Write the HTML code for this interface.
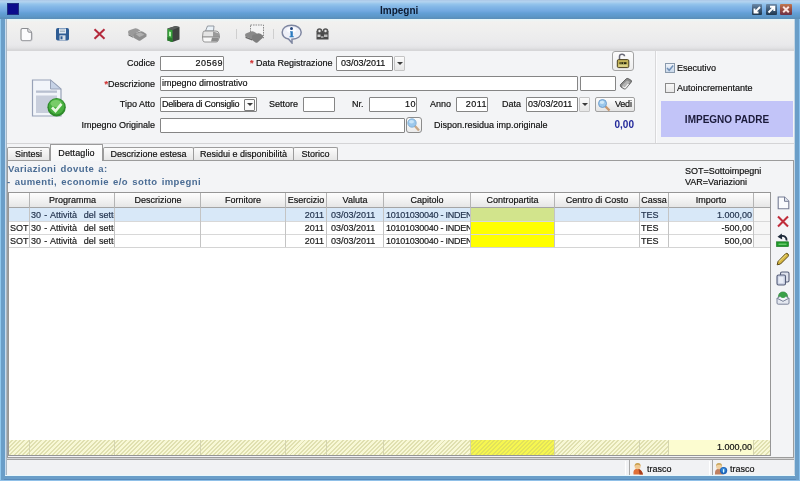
<!DOCTYPE html>
<html><head><meta charset="utf-8">
<style>
*{margin:0;padding:0;box-sizing:border-box}
html,body{width:800px;height:481px;overflow:hidden}
body{position:relative;background:#6a9ec8;font-family:"Liberation Sans",sans-serif;font-size:9px;color:#101010}
.a{position:absolute}
.t{position:absolute;white-space:nowrap;line-height:15px;height:15px}
.r{text-align:right}
.inp{position:absolute;background:#fff;border:1px solid #858585;border-radius:1px;height:15px;line-height:13px;white-space:nowrap;overflow:hidden;padding:0 1px}
.dd{position:absolute;border:1px solid #c4c4c4;background:linear-gradient(#fbfbfb,#e6e6e6);border-radius:1px}
.dd:after{content:"";position:absolute;left:50%;margin-left:-3px;top:50%;margin-top:-2px;border-left:3px solid transparent;border-right:3px solid transparent;border-top:3px solid #3a3a3a}
.star{color:#d03030;font-weight:bold}
#frame{left:0;top:0;width:800px;height:481px;background:linear-gradient(90deg,#90c8ee 0,#90c8ee 1px,#6a9ec8 1px,#6a9ec8 799px,#88c0ec 799px)}
#title{left:0;top:0;width:800px;height:19px;background:linear-gradient(#a9c4e4 0,#b4d2ef 1px,#b0d2ef 2px,#94c4ec 4px,#82b6e6 7px,#72a8e0 11px,#63a0d6 13px,#5c96c6 17px,#5b8fba 18px,#5b8fba 19px)}
#content{left:5px;top:19px;width:790px;height:457px;background:#f3f4f6}
#toolbar{left:5px;top:19px;width:790px;height:32px;background:linear-gradient(#e4f6fb 0,#eef4f4 1.5px,#f2f1ef 3px,#eeeeee 14px,#e9e9eb 26px,#e2e2e4 29px,#d6d6d8 31px)}
.sep{position:absolute;width:1px;height:10px;background:#cfcfcf;top:29px}
.tab{position:absolute;top:147px;height:13px;border:1px solid #9c9c9c;border-bottom:none;background:linear-gradient(#fbfbfb,#e6e6e6);line-height:12px;text-align:center;border-radius:2px 2px 0 0}
.gh{position:absolute;top:193px;height:15px;line-height:14px;text-align:center;white-space:nowrap;overflow:hidden}
.gl{position:absolute;width:1px;background:#c4c4c4}
.cell{position:absolute;white-space:nowrap;overflow:hidden;line-height:13px;height:13px}
.t,.inp,.cell,.gh,.tab{-webkit-text-stroke:0.18px currentColor}
#wrap{position:absolute;left:0;top:0;width:800px;height:481px;filter:blur(0.3px)}
</style></head><body><div id="wrap">
<div id="frame" class="a"></div>
<div id="title" class="a"></div>
<!-- app icon -->
<div class="a" style="left:7px;top:3px;width:12px;height:12px;background:#0c0c8c;border:1px solid #203080"></div>
<div class="t" style="left:380px;top:3px;font-size:10px;font-weight:bold;color:#0c1a30;-webkit-text-stroke:0">Impegni</div>
<!-- window buttons -->
<div class="a" style="left:752px;top:4px;width:10px;height:11px;background:linear-gradient(#6d8cab 0,#46627e 40%,#1f374d 100%);border-radius:1px"></div>
<svg class="a" style="left:752px;top:4px" width="10" height="11"><path d="M8 3 L3.2 7.8 M2.5 4.5 V8.5 H6.5" stroke="#fff" stroke-width="1.9" fill="none"/></svg>
<div class="a" style="left:766px;top:4px;width:11px;height:11px;background:linear-gradient(#6d8cab 0,#46627e 40%,#1f374d 100%);border-radius:1px"></div>
<svg class="a" style="left:766px;top:4px" width="11" height="11"><path d="M2.5 8.5 L7.5 3.5 M4 2.8 H8.3 V7" stroke="#fff" stroke-width="1.9" fill="none"/></svg>
<div class="a" style="left:780px;top:4px;width:12px;height:11px;background:linear-gradient(#c07850 0,#a05040 45%,#6a3048 100%);border-radius:1px"></div>
<svg class="a" style="left:780px;top:4px" width="12" height="11"><path d="M3.2 2.8 L8.8 8.2 M8.8 2.8 L3.2 8.2" stroke="#fae4e0" stroke-width="2" fill="none"/></svg>

<div id="content" class="a"></div>
<div id="toolbar" class="a"></div>
<!-- toolbar icons -->
<svg class="a" style="left:19px;top:27px" width="15" height="15"><path d="M3.5 1.5 H8.8 L12.5 5.2 V12 Q12.5 13.5 11 13.5 H3.5 Q2 13.5 2 12 V3 Q2 1.5 3.5 1.5Z" fill="#fbfbfd" stroke="#8a8c90" stroke-width="1.1"/><path d="M8.8 1.5 V4 Q8.8 5.2 10 5.2 H12.5" fill="#e8e8ec" stroke="#8a8c90" stroke-width="1"/><path d="M3 14 H11.5 Q13.2 14 13.2 12.3 V6" stroke="#c4c4c8" fill="none" stroke-width="0.9"/></svg>
<svg class="a" style="left:55px;top:27px" width="15" height="14"><rect x="1" y="1" width="13" height="12.5" rx="1.8" fill="#2e5c94"/><rect x="4" y="1.5" width="7" height="5" fill="#dfe8f2"/><rect x="5" y="2.6" width="5" height="0.8" fill="#9ab"/><rect x="5" y="4.2" width="5" height="0.8" fill="#9ab"/><rect x="4.5" y="8.3" width="6" height="5" fill="#d4dde8"/><rect x="5.5" y="9.3" width="2" height="3" fill="#2e5c94"/></svg>
<svg class="a" style="left:93px;top:28px" width="13" height="12"><path d="M1.5 1.2 L11.5 10.8 M11.5 1.2 L1.5 10.8" stroke="#b42a3c" stroke-width="2"/></svg>
<svg class="a" style="left:127px;top:27px" width="21" height="15"><path d="M1 5 Q1 3.5 3 3 L7.5 1.5 Q9 1 10.5 1.8 L13.5 3.5 L8 6.5 L6.5 10 L1.5 7 Z" fill="#9a9a9a"/><path d="M1.5 7 L6.5 10 L6.5 11 L1.5 8.5Z" fill="#7a7a7a"/><path d="M6.5 8 Q6.5 6.5 8.5 6 L13 4.5 Q14.5 4 16 4.8 L19.5 7 L19.5 9.5 L13.5 13.5 Q12.5 14 11.5 13.5 L7 11 Z" fill="#8e8e8e"/><path d="M8.5 7 L13.5 5.5 L17.5 7.8 L12.5 10 Z" fill="#b0b0b0"/></svg>
<svg class="a" style="left:166px;top:25px" width="15" height="18"><path d="M1.5 3.5 L9.5 1 L13.5 2 L13.5 14.5 L6.5 17 L1.5 15.5 Z" fill="#3e4240"/><path d="M1.5 3.5 L6.5 5 L6.5 17 L1.5 15.5Z" fill="#36a03a"/><path d="M1.5 3.5 L9.5 1 L13.5 2 L6.5 5 Z" fill="#5a5e5c"/><path d="M3 6.5 L5 7 V11.5 L3 11Z" fill="#b8f0b0"/><path d="M1.5 12 L6.5 13.5 V17 L1.5 15.5Z" fill="#2a7a2e"/></svg>
<svg class="a" style="left:201px;top:25px" width="20" height="18"><path d="M4.5 6 L6.5 1 H13 L12.5 6 Z" fill="#eaf2f8" stroke="#8a9098" stroke-width="0.9"/><path d="M2 7.5 Q2 6 4 6 H15 Q17.5 6 18 8.5 L18.5 12 H1.5 Z" fill="#e4e4e4" stroke="#8c8c8c" stroke-width="0.9"/><path d="M12 6.5 L18 8.5 L18.5 12 L12 12Z" fill="#9a9a9a"/><path d="M1.5 12 H18.5 L17 16 Q16.5 17 15 17 H4 Q2.5 17 2 16 Z" fill="#f8f8f8" stroke="#8c8c8c" stroke-width="0.9"/><path d="M11 12.5 H18 L16.5 16.5 H10Z" fill="#8a8a8a"/></svg>
<div class="sep" style="left:236px"></div>
<svg class="a" style="left:244px;top:24px" width="21" height="20"><rect x="6.5" y="1" width="13" height="13" fill="#f4f4f4" stroke="#8a8a8a" stroke-dasharray="1.6 0.9"/><path d="M1 11 Q1 9.5 3 9 L7 7.5 Q8.5 7 10 7.8 L13 9.5 L9 12 L8 15 L1.5 12.5 Z" fill="#8a8a8a"/><path d="M8 12.5 Q8 11 10 10.5 L13.5 9.5 Q15 9 16.5 9.8 L19 11.5 L19 13.5 L13.5 18.5 Q12.5 19 11.5 18.5 L8 16 Z" fill="#7e7e7e"/><path d="M1.5 12.5 L8 15 L8 16.5 L1.5 14 Z" fill="#6a6a6a"/></svg>
<div class="sep" style="left:273px"></div>
<svg class="a" style="left:281px;top:24px" width="22" height="20"><path d="M10.5 1.2 C4.8 1.2 1.2 4.4 1.2 8.3 C1.2 11.8 4 14.3 7.5 15 L11 19 L11 15.3 C16.5 15 20.2 12.2 20.2 8.3 C20.2 4.4 16.2 1.2 10.5 1.2Z" fill="#eef0f8" stroke="#7e86a0" stroke-width="1.5"/><ellipse cx="10.5" cy="6" rx="5" ry="3" fill="#fafbff"/><circle cx="10.5" cy="4.6" r="1.5" fill="#2a4a80"/><path d="M9 7.3 H11.8 V12.3 H12.8 V13.3 H8.5 V12.3 H9.5 V8.3 H9Z" fill="#2a7ac0"/></svg>
<svg class="a" style="left:315px;top:27px" width="15" height="14"><path d="M1.5 4 H13.5 V12.5 H1.5Z" fill="#4a4a4a"/><circle cx="4.5" cy="4" r="2.8" fill="#555"/><circle cx="10.5" cy="4" r="2.8" fill="#555"/><circle cx="4.5" cy="4" r="1.2" fill="#e8e8e8"/><circle cx="10.5" cy="4" r="1.2" fill="#e8e8e8"/><rect x="2.5" y="7.5" width="3" height="2.5" fill="#cfcfcf"/><rect x="9" y="7.5" width="3.5" height="2.5" fill="#bdbdbd"/><rect x="6" y="9" width="2.5" height="2" fill="#9a9a9a"/></svg>

<!-- form -->
<div class="a" style="left:5px;top:143px;width:790px;height:1px;background:#d4d4d6"></div>
<div class="a" style="left:655px;top:51px;width:1px;height:92px;background:#d8d8da"></div><div class="a" style="left:656px;top:51px;width:1px;height:92px;background:#fbfbfd"></div>
<!-- big doc icon -->
<svg class="a" style="left:31px;top:79px" width="40" height="40"><path d="M1.5 1 H19.5 L30 10 V37 H1.5 Z" fill="#f2f5fa" stroke="#98a2b8" stroke-width="1.2"/><path d="M19.5 1 V10 H30 Z" fill="#c6d2e6" stroke="#98a2b8" stroke-width="1"/><rect x="5" y="11.5" width="21" height="2.3" fill="#b8c0d0"/><rect x="5" y="16.5" width="21" height="17.5" fill="#c8cedc"/><circle cx="25.6" cy="28.2" r="9.2" fill="#2e8a2a"/><circle cx="25.6" cy="27.6" r="7.8" fill="#48b040"/><ellipse cx="25" cy="24.5" rx="5.5" ry="3.5" fill="#78cc68"/><path d="M21 28.5 L24.5 32 L30.5 24.8" stroke="#e8f8e0" stroke-width="2.6" fill="none"/></svg>

<div class="t r" style="left:100px;width:55px;top:56px">Codice</div>
<div class="inp r" style="left:160px;top:56px;width:64px;letter-spacing:0.5px;padding-right:0">20569</div>
<div class="t" style="left:250px;top:56px"><span class="star">*</span> Data Registrazione</div>
<div class="inp" style="left:336px;top:56px;width:57px;padding-left:4px">03/03/2011</div>
<div class="dd" style="left:394px;top:56px;width:11px;height:15px"></div>
<div class="a" style="left:612px;top:51px;width:22px;height:20px;border:1px solid #a4a4a4;border-radius:3px;background:linear-gradient(#fdfdfd,#ededed)"></div>
<svg class="a" style="left:612px;top:51px" width="22" height="20"><path d="M7.5 8.5 V5.5 Q7.5 3.3 10 3.3 Q12.5 3.3 12.5 5.3" stroke="#6a6a78" stroke-width="1.5" fill="none"/><rect x="5.3" y="8.6" width="11.5" height="8" rx="1.3" fill="#c4b458" stroke="#4a4020" stroke-width="1"/><rect x="6.5" y="13.3" width="9" height="2.5" fill="#dcd488"/><rect x="7.5" y="11.2" width="7" height="2" fill="#2a2810"/><rect x="8.5" y="11.6" width="1" height="1" fill="#e8e070"/><rect x="11" y="11.6" width="1" height="1" fill="#e8e070"/></svg>

<div class="t r" style="left:80px;width:75px;top:77px"><span class="star">*</span>Descrizione</div>
<div class="inp" style="left:160px;top:76px;width:418px">impegno dimostrativo</div>
<div class="inp" style="left:580px;top:76px;width:36px"></div>
<svg class="a" style="left:619px;top:77px" width="14" height="14"><path d="M1.5 7.5 L7 2 Q8 1 9.2 1.6 L11.8 3 Q13 3.8 12.3 5 L7 11.5 Q6 12.5 4.8 11.8 L2 10 Q1 9 1.5 7.5Z" fill="#8a8a8a" stroke="#5a5a5a" stroke-width="0.9"/><path d="M3 8.5 L8 3.5 L11 5 L6 10Z" fill="#b4b4b4"/><path d="M3.5 9.5 L6 11 L9.5 7" stroke="#f4f4f4" stroke-width="1.3" fill="none"/></svg>

<div class="t r" style="left:80px;width:75px;top:97px">Tipo Atto</div>
<div class="inp" style="left:160px;top:97px;width:97px;letter-spacing:-0.25px">Delibera di Consiglio</div>
<div class="dd" style="left:244px;top:99px;width:11px;height:12px;border-color:#7c7c7c;background:#fafafa"></div>
<div class="t" style="left:269px;top:97px">Settore</div>
<div class="inp" style="left:303px;top:97px;width:32px"></div>
<div class="t" style="left:352px;top:97px">Nr.</div>
<div class="inp r" style="left:369px;top:97px;width:48px;letter-spacing:0.5px;padding-right:0">10</div>
<div class="t" style="left:430px;top:97px">Anno</div>
<div class="inp r" style="left:456px;top:97px;width:32px;letter-spacing:0.5px;padding-right:0">2011</div>
<div class="t" style="left:502px;top:97px">Data</div>
<div class="inp" style="left:526px;top:97px;width:52px">03/03/2011</div>
<div class="dd" style="left:579px;top:97px;width:11px;height:15px"></div>
<div class="a" style="left:595px;top:97px;width:40px;height:15px;border:1px solid #a0a0a0;border-radius:2px;background:linear-gradient(#fdfdfd,#e4e4e4)"></div>
<svg class="a" style="left:597px;top:98px" width="15" height="14"><path d="M7.5 7.5 L12.5 12.5" stroke="#c89870" stroke-width="2.4"/><circle cx="5.5" cy="5.5" r="4" fill="#9cc8ec" stroke="#6a98c8" stroke-width="0.9"/><ellipse cx="5" cy="4.3" rx="2.3" ry="1.6" fill="#d0e8f8"/></svg>
<div class="t" style="left:615px;top:97px;letter-spacing:-0.2px">Vedi</div>

<div class="t r" style="left:60px;width:95px;top:118px">Impegno Originale</div>
<div class="inp" style="left:160px;top:118px;width:245px"></div>
<div class="a" style="left:406px;top:117px;width:16px;height:16px;border:1px solid #8c8c8c;border-radius:3px;background:linear-gradient(#fbfbfb,#ececec)"></div>
<svg class="a" style="left:406px;top:117px" width="16" height="16"><path d="M8.5 8.5 L13 13.5" stroke="#c8a888" stroke-width="2.4"/><circle cx="6" cy="6" r="4.2" fill="#9cc8ec" stroke="#7aa8d0" stroke-width="0.8"/><ellipse cx="5.5" cy="4.8" rx="2.5" ry="1.8" fill="#c8e4f8"/></svg>
<div class="t" style="left:434px;top:118px">Dispon.residua imp.originale</div>
<div class="t r" style="left:590px;width:44px;top:117px;font-weight:bold;color:#22289a;font-size:10px;-webkit-text-stroke:0">0,00</div>

<!-- right panel -->
<div class="a" style="left:665px;top:63px;width:10px;height:10px;border:1px solid #8a9aac;background:linear-gradient(#f0f4fa,#c8d8ea)"></div>
<svg class="a" style="left:665px;top:63px" width="10" height="10"><path d="M2 5 L4.2 7.3 L8.2 2.5" stroke="#7090b8" stroke-width="1.5" fill="none"/></svg>
<div class="t" style="left:677px;top:61px">Esecutivo</div>
<div class="a" style="left:665px;top:83px;width:10px;height:10px;border:1px solid #8a8a8a;background:linear-gradient(#f8f8f8,#e8e8e8)"></div>
<div class="t" style="left:677px;top:81px">Autoincrementante</div>
<div class="a" style="left:661px;top:101px;width:132px;height:36px;background:#c2c4f8"></div>
<div class="t" style="left:661px;width:132px;top:112px;text-align:center;font-weight:bold;font-size:10px;color:#1a1a3a;-webkit-text-stroke:0">IMPEGNO PADRE</div>

<!-- tabs -->
<div class="a" style="left:7px;top:160px;width:787px;height:298px;border:1px solid #9c9c9c;background:#f3f4f6"></div>
<div class="a" style="left:6px;top:458px;width:788px;height:1px;background:#d6d6d6"></div>
<div class="a" style="left:6px;top:459px;width:788px;height:1px;background:#a2a2a2"></div>
<div class="tab" style="left:7px;width:43px">Sintesi</div>
<div class="tab" style="left:103px;width:91px">Descrizione estesa</div>
<div class="tab" style="left:193px;width:101px">Residui e disponibilità</div>
<div class="tab" style="left:293px;width:45px">Storico</div>
<div class="a t" style="left:50px;top:144px;width:53px;height:17px;border:1px solid #9a9a9a;border-bottom:none;background:linear-gradient(#fdfdfd,#f6f7f8);border-radius:1px 1px 0 0;line-height:17px;text-align:center;letter-spacing:0.1px">Dettaglio</div>

<div class="t" style="left:8px;top:161px;font-size:9.5px;font-weight:bold;color:#4a6c94;-webkit-text-stroke:0;line-height:15px;letter-spacing:0.4px;word-spacing:1.2px">Variazioni dovute a:</div>
<div class="t" style="left:7px;top:174px;font-size:9.5px;font-weight:bold;color:#4a6c94;-webkit-text-stroke:0;line-height:15px;letter-spacing:0.4px;word-spacing:1.2px">- aumenti, economie e/o sotto impegni</div>
<div class="t" style="left:685px;top:165px;line-height:12px">SOT=Sottoimpegni</div>
<div class="t" style="left:685px;top:176px;line-height:12px">VAR=Variazioni</div>

<!-- grid -->
<div class="a" style="left:8px;top:192px;width:763px;height:264px;background:#fff;border:1px solid #969696"></div>
<div class="a" style="left:9px;top:193px;width:761px;height:15px;background:linear-gradient(#fdfdfd 0,#f4f4f4 6px,#e6e6e6 14px);border-bottom:1px solid #a4a4a4"></div>
<div class="a" style="left:9px;top:208px;width:744px;height:13px;background:#d8e8f8"></div>
<div class="a" style="left:753px;top:208px;width:17px;height:39px;background:#f6f6f6"></div>
<div class="a" style="left:470px;top:208px;width:84px;height:13px;background:#d2e48c"></div>
<div class="a" style="left:470px;top:221px;width:84px;height:26px;background:#ffff00"></div>
<div class="a" style="left:9px;top:221px;width:761px;height:1px;background:#d8d8d8"></div>
<div class="a" style="left:9px;top:234px;width:761px;height:1px;background:#d8d8d8"></div>
<div class="a" style="left:9px;top:247px;width:761px;height:1px;background:#d4d4d4"></div>
<!-- footer -->
<div class="a" style="left:9px;top:440px;width:761px;height:15px;background:repeating-linear-gradient(135deg,#f8f8d6 0,#f8f8d6 1.6px,#e0e0b0 1.6px,#e0e0b0 3px)"></div>
<div class="a" style="left:470px;top:440px;width:84px;height:15px;background:repeating-linear-gradient(135deg,#f6f650 0,#f6f650 1.6px,#e2e25a 1.6px,#e2e25a 3px)"></div>
<div class="a" style="left:669px;top:440px;width:84px;height:15px;background:#fcfcd0"></div>
<div class="cell r" style="left:669px;width:83px;top:441px">1.000,00</div>
<div class="gh" style="left:30px;width:85px">Programma</div>
<div class="gh" style="left:116px;width:84px">Descrizione</div>
<div class="gh" style="left:201px;width:84px">Fornitore</div>
<div class="gh" style="left:286px;width:40px">Esercizio</div>
<div class="gh" style="left:327px;width:56px">Valuta</div>
<div class="gh" style="left:384px;width:86px">Capitolo</div>
<div class="gh" style="left:471px;width:83px">Contropartita</div>
<div class="gh" style="left:555px;width:84px">Centro di Costo</div>
<div class="gh" style="left:640px;width:28px">Cassa</div>
<div class="gh" style="left:669px;width:84px">Importo</div>
<div class="cell" style="left:10px;width:19px;top:209px;color:#24344e"></div>
<div class="cell" style="left:31px;width:84px;top:209px;color:#24344e;word-spacing:0.8px">30 - Attività&nbsp; del settore</div>
<div class="cell r" style="left:285px;width:39px;top:209px;color:#24344e">2011</div>
<div class="cell" style="left:331px;width:52px;top:209px;color:#24344e">03/03/2011</div>
<div class="cell" style="left:386px;width:84px;top:209px;color:#24344e;letter-spacing:-0.25px">10101030040 - INDENNITA</div>
<div class="cell" style="left:641px;width:27px;top:209px;color:#24344e">TES</div>
<div class="cell r" style="left:669px;width:83px;top:209px;color:#24344e">1.000,00</div>
<div class="cell" style="left:10px;width:19px;top:222px;color:#1a1a1a">SOT</div>
<div class="cell" style="left:31px;width:84px;top:222px;color:#1a1a1a;word-spacing:0.8px">30 - Attività&nbsp; del settore</div>
<div class="cell r" style="left:285px;width:39px;top:222px;color:#1a1a1a">2011</div>
<div class="cell" style="left:331px;width:52px;top:222px;color:#1a1a1a">03/03/2011</div>
<div class="cell" style="left:386px;width:84px;top:222px;color:#1a1a1a;letter-spacing:-0.25px">10101030040 - INDENNITA</div>
<div class="cell" style="left:641px;width:27px;top:222px;color:#1a1a1a">TES</div>
<div class="cell r" style="left:669px;width:83px;top:222px;color:#1a1a1a">-500,00</div>
<div class="cell" style="left:10px;width:19px;top:235px;color:#1a1a1a">SOT</div>
<div class="cell" style="left:31px;width:84px;top:235px;color:#1a1a1a;word-spacing:0.8px">30 - Attività&nbsp; del settore</div>
<div class="cell r" style="left:285px;width:39px;top:235px;color:#1a1a1a">2011</div>
<div class="cell" style="left:331px;width:52px;top:235px;color:#1a1a1a">03/03/2011</div>
<div class="cell" style="left:386px;width:84px;top:235px;color:#1a1a1a;letter-spacing:-0.25px">10101030040 - INDENNITA</div>
<div class="cell" style="left:641px;width:27px;top:235px;color:#1a1a1a">TES</div>
<div class="cell r" style="left:669px;width:83px;top:235px;color:#1a1a1a">500,00</div>
<div class="gl" style="left:29px;top:193px;height:15px;background:#b4b4b4"></div>
<div class="gl" style="left:29px;top:208px;height:39px"></div>
<div class="gl" style="left:29px;top:440px;height:15px;background:#d4d4b0"></div>
<div class="gl" style="left:114px;top:193px;height:15px;background:#b4b4b4"></div>
<div class="gl" style="left:114px;top:208px;height:39px"></div>
<div class="gl" style="left:114px;top:440px;height:15px;background:#d4d4b0"></div>
<div class="gl" style="left:200px;top:193px;height:15px;background:#b4b4b4"></div>
<div class="gl" style="left:200px;top:208px;height:39px"></div>
<div class="gl" style="left:200px;top:440px;height:15px;background:#d4d4b0"></div>
<div class="gl" style="left:285px;top:193px;height:15px;background:#b4b4b4"></div>
<div class="gl" style="left:285px;top:208px;height:39px"></div>
<div class="gl" style="left:285px;top:440px;height:15px;background:#d4d4b0"></div>
<div class="gl" style="left:326px;top:193px;height:15px;background:#b4b4b4"></div>
<div class="gl" style="left:326px;top:208px;height:39px"></div>
<div class="gl" style="left:326px;top:440px;height:15px;background:#d4d4b0"></div>
<div class="gl" style="left:383px;top:193px;height:15px;background:#b4b4b4"></div>
<div class="gl" style="left:383px;top:208px;height:39px"></div>
<div class="gl" style="left:383px;top:440px;height:15px;background:#d4d4b0"></div>
<div class="gl" style="left:470px;top:193px;height:15px;background:#b4b4b4"></div>
<div class="gl" style="left:470px;top:208px;height:39px"></div>
<div class="gl" style="left:470px;top:440px;height:15px;background:#d4d4b0"></div>
<div class="gl" style="left:554px;top:193px;height:15px;background:#b4b4b4"></div>
<div class="gl" style="left:554px;top:208px;height:39px"></div>
<div class="gl" style="left:554px;top:440px;height:15px;background:#d4d4b0"></div>
<div class="gl" style="left:639px;top:193px;height:15px;background:#b4b4b4"></div>
<div class="gl" style="left:639px;top:208px;height:39px"></div>
<div class="gl" style="left:639px;top:440px;height:15px;background:#d4d4b0"></div>
<div class="gl" style="left:668px;top:193px;height:15px;background:#b4b4b4"></div>
<div class="gl" style="left:668px;top:208px;height:39px"></div>
<div class="gl" style="left:668px;top:440px;height:15px;background:#d4d4b0"></div>
<div class="gl" style="left:753px;top:193px;height:15px;background:#b4b4b4"></div>
<div class="gl" style="left:753px;top:208px;height:39px"></div>
<div class="gl" style="left:753px;top:440px;height:15px;background:#d4d4b0"></div>

<!-- side icons -->
<svg class="a" style="left:777px;top:196px" width="13" height="14"><path d="M1.2 1 H7.5 L11.8 5.3 V12.8 H1.2 Z" fill="#fafbfd" stroke="#757c94" stroke-width="1.1"/><path d="M7.5 1 V5.3 H11.8" fill="#e2e6ee" stroke="#757c94" stroke-width="1"/></svg>
<svg class="a" style="left:776px;top:215px" width="14" height="13"><path d="M2 1.5 L12 11.5 M12 1.5 L2 11.5" stroke="#c02c3a" stroke-width="2.1"/></svg>
<svg class="a" style="left:776px;top:233px" width="14" height="15"><path d="M10.5 7.5 C11 4 8 2.2 5 3.2" stroke="#1e2a3a" stroke-width="1.9" fill="none"/><path d="M1.5 3.8 L5.8 0.5 L6.2 6.5 Z" fill="#1e2a3a"/><rect x="0.5" y="8.8" width="12" height="4.8" fill="#1f9a2a" stroke="#137018" stroke-width="0.6"/><rect x="2.5" y="10.6" width="8" height="1.2" fill="#7ad47a"/></svg>
<svg class="a" style="left:776px;top:252px" width="14" height="14"><path d="M1.2 12.8 L2 9.5 L9.5 1.8 Q10.8 0.8 12 2 Q13 3.2 12 4.5 L4.5 12 Z" fill="#d8b840" stroke="#5a4a18" stroke-width="1"/><path d="M3 9.5 L10 2.8" stroke="#f0e090" stroke-width="1"/></svg>
<svg class="a" style="left:776px;top:271px" width="14" height="15"><rect x="4.5" y="1" width="8.5" height="10" rx="1.5" fill="#dfe3ee" stroke="#555d78" stroke-width="1.1"/><rect x="1" y="4" width="8.5" height="10" rx="1.5" fill="#cdd3e4" stroke="#555d78" stroke-width="1.1"/><rect x="2.5" y="6" width="5" height="6" fill="#e8ecf6"/></svg>
<svg class="a" style="left:776px;top:291px" width="14" height="14"><circle cx="7" cy="5.5" r="4.6" fill="#3aa048" stroke="#2a7a36" stroke-width="0.6"/><path d="M1 7 L7 10 L13 7 V12 Q13 13.2 11.8 13.2 H2.2 Q1 13.2 1 12 Z" fill="#e4e8f0" stroke="#707890" stroke-width="0.9"/><path d="M1.3 7.2 L7 3.5 L12.7 7.2 L7 10.3Z" fill="#f4f6fa" stroke="#707890" stroke-width="0.8"/><circle cx="7" cy="4" r="3" fill="#3aa048"/></svg>

<!-- status bar -->
<div class="a" style="left:5px;top:460px;width:790px;height:16px;background:#f1f2f4"></div>
<div class="a" style="left:625px;top:461px;width:1px;height:15px;background:#fff"></div>
<div class="a" style="left:629px;top:460px;width:1px;height:16px;background:#a8a8a8"></div>
<div class="a" style="left:709px;top:461px;width:1px;height:15px;background:#fff"></div>
<div class="a" style="left:712px;top:460px;width:1px;height:16px;background:#a8a8a8"></div>
<svg class="a" style="left:632px;top:462px" width="12" height="13"><path d="M1.5 12.5 Q0.8 7 5 6.8 Q9.5 6.8 11 12.5 Z" fill="#e07038"/><path d="M6.5 7 Q9.8 7.5 11 12.5 H7.5 Z" fill="#a8401e"/><circle cx="5.6" cy="4.2" r="3" fill="#f0c890"/><path d="M2.6 4 Q2.8 1 5.6 1 Q8.6 1 8.6 4 Q7 2.6 5.6 2.8 Q4 2.8 2.6 4Z" fill="#c8a050"/></svg>
<div class="t" style="left:647px;top:462px">trasco</div>
<svg class="a" style="left:714px;top:462px" width="14" height="13"><path d="M1 12.5 Q0.5 7 4.5 6.8 Q8.5 6.8 9.5 12.5 Z" fill="#c08060"/><circle cx="5" cy="4.2" r="3" fill="#f0d0a0"/><path d="M2 4 Q2.2 1 5 1 Q8 1 8 4 Q6.5 2.6 5 2.8 Q3.4 2.8 2 4Z" fill="#c8a860"/><circle cx="9.6" cy="8.6" r="3.6" fill="#1e64b8"/><circle cx="9.4" cy="8" r="2.3" fill="#3a8ad8"/><rect x="9" y="7.2" width="1.2" height="3.4" fill="#dff"/></svg>
<div class="t" style="left:730px;top:462px">trasco</div>
<!-- inner frame lines -->
<div class="a" style="left:5px;top:19px;width:1px;height:457px;background:#c8dcf0"></div>
<div class="a" style="left:6px;top:19px;width:1px;height:457px;background:#a8b8c4"></div>
<div class="a" style="left:794px;top:19px;width:1px;height:457px;background:#c4d6e4"></div>
<div class="a" style="left:5px;top:475px;width:790px;height:1px;background:#e8f8fc"></div>
<div class="a" style="left:0;top:480px;width:800px;height:1px;background:#90c0e8"></div>
<div class="a" style="left:4px;top:479px;width:792px;height:1px;background:#5a8cbc"></div>
</div></body></html>
